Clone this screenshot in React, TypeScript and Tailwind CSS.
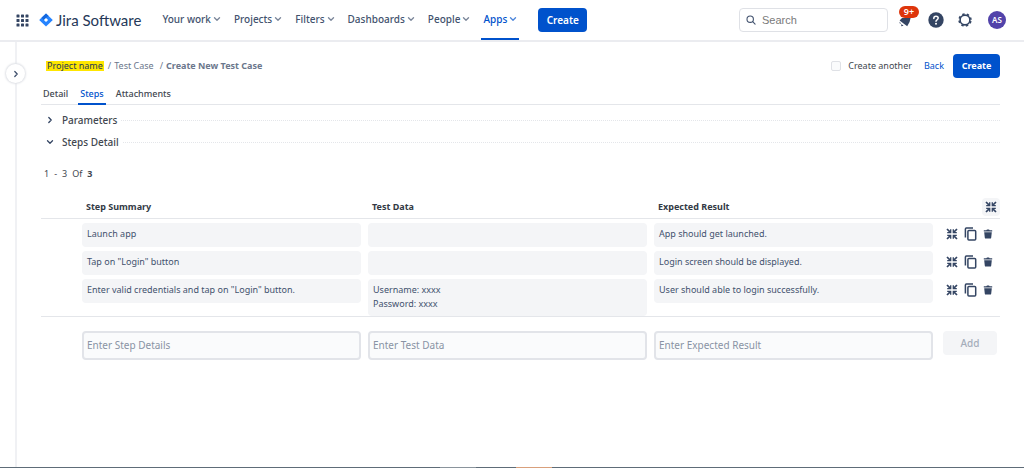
import { useState } from "react";
import clsx from "clsx";

const NAV_ITEMS = ["Your work", "Projects", "Filters", "Dashboards", "People", "Apps"];

const TABS = ["Detail", "Steps", "Attachments"];

const STEPS = [
  { summary: "Launch app", data: "", expected: "App should get launched." },
  { summary: 'Tap on "Login" button', data: "", expected: "Login screen should be displayed." },
  {
    summary: 'Enter valid credentials and tap on "Login" button.',
    data: "Username: xxxx\nPassword: xxxx",
    expected: "User should able to login successfully.",
  },
];

const DRAFT_FIELDS = ["Enter Step Details", "Enter Test Data", "Enter Expected Result"];

function Chevron({ className }: { className?: string }) {
  return (
    <svg viewBox="0 0 8 8" className={clsx("h-2 w-2 shrink-0", className)} fill="none" stroke="currentColor" strokeWidth="1.3" strokeLinecap="round" strokeLinejoin="round" aria-hidden>
      <path d="M1.5 2.8 4 5.2 6.5 2.8" />
    </svg>
  );
}

function CollapseIcon() {
  return (
    <svg viewBox="0 0 12 12" className="h-3 w-3" fill="none" stroke="currentColor" strokeWidth="1.7" aria-hidden>
      <path d="M1 1l3.4 3.4M11 1 7.6 4.4M1 11l3.4-3.4M11 11 7.6 7.6" />
      <path d="M1.2 4.7h3.5V1.2M10.8 4.7H7.3V1.2M1.2 7.3h3.5v3.5M10.8 7.3H7.3v3.5" strokeWidth="1.3" />
    </svg>
  );
}

function CopyIcon() {
  return (
    <svg viewBox="0 0 13 14" className="h-3.5 w-[13px]" fill="none" stroke="currentColor" strokeWidth="1.5" aria-hidden>
      <path d="M1.4 10.6V2q0-1 1-1h6.6" />
      <rect x="3.9" y="3.4" width="7.8" height="9.6" rx="1" />
    </svg>
  );
}

function TrashIcon() {
  return (
    <svg viewBox="0 0 10 10" className="h-2.5 w-2.5" fill="currentColor" aria-hidden>
      <path d="M.8 2.6V1.2h2.5L4 .4h2l.7.8h2.5v1.4zM1.2 3.2h7.6L8.2 8.7q-.1.9-1 .9H2.8q-.9 0-1-.9z" />
    </svg>
  );
}

function Header() {
  return (
    <header className="flex h-[42px] items-center border-b-2 border-[#ebecf0] pr-[18px] pl-4 text-[#42526e]">
      <button type="button" aria-label="Switch product">
        <svg viewBox="0 0 13 13" className="h-[13px] w-[13px]" fill="#344563" aria-hidden>
          {[0.5, 5, 9.5].map((y) => [0.5, 5, 9.5].map((x) => <rect key={`${x}-${y}`} x={x} y={y} width="3" height="3" rx="0.6" />))}
        </svg>
      </button>
      <a href="#" className="ml-2.5 flex items-center gap-[3px] whitespace-nowrap">
        <svg viewBox="0 0 14 14" className="h-3.5 w-3.5" aria-hidden>
          <path d="M7 .4 13.3 6.4q.6.6 0 1.2L7 13.6.7 7.6q-.6-.6 0-1.2z" fill="#2684ff" />
          <path d="M7 .4 9.7 3Q7.4 4 7 5L4.8 7 2.5 4.7z" fill="#1467dd" />
          <path d="M7 4.9 9.1 7 7 9.1 4.9 7z" fill="#fff" />
        </svg>
        <span className="font-['Lato',sans-serif] text-[15px] text-[#253858]">Jira Software</span>
      </a>
      <nav className="ml-[19px] flex h-10 items-stretch gap-[9px] text-[10px] font-medium whitespace-nowrap">
        {NAV_ITEMS.map((item) => (
          <button
            key={item}
            type="button"
            className={clsx(
              "mt-0.5 flex items-center gap-0.5 border-b-2 px-0.5 pb-0.5",
              item === "Apps" ? "border-[#0052cc] text-[#0052cc]" : "border-transparent",
            )}
          >
            {item}
            <Chevron className="opacity-70" />
          </button>
        ))}
      </nav>
      <button type="button" className="ml-[19px] h-6 w-[49px] rounded-sm bg-[#0052cc] text-[10px] font-semibold text-white">
        Create
      </button>
      <div className="ml-auto flex items-center">
        <label className="flex h-6 w-[149px] items-center gap-1.5 rounded border border-[#dfe1e6] px-1.5">
          <svg viewBox="0 0 10 10" className="h-2.5 w-2.5 shrink-0" fill="none" stroke="#42526e" strokeWidth="1.1" strokeLinecap="round" aria-hidden>
            <circle cx="4.2" cy="4.2" r="3.2" />
            <path d="m6.7 6.7 2.4 2.4" />
          </svg>
          <input type="search" aria-label="Search" placeholder="Search" className="w-full min-w-0 font-['Liberation_Sans',sans-serif] text-[11px] outline-none placeholder:text-[#7a7a7a]" />
        </label>
        <button type="button" aria-label="Notifications" className="relative ml-2.5 h-5 w-5">
          <svg viewBox="0 0 14 14" className="h-3.5 w-3.5" fill="#344563" aria-hidden>
            <path d="M1.6 7.6 4 5h8.6q-.4 4-3.4 8.2L7.2 11.8z" />
            <path d="m1.4 8.8 1.8 1.6-1.4.2zM3.4 11l2.2 1.8-2.4.4z" />
          </svg>
          <span className="absolute -top-1 left-px flex h-3 w-5 items-center justify-center rounded-full bg-[#de350b] text-[9px] font-semibold text-white">9+</span>
        </button>
        <button type="button" aria-label="Help" className="ml-2.5">
          <svg viewBox="0 0 16 16" className="h-4 w-4" fill="none" aria-hidden>
            <circle cx="8" cy="8" r="7.7" fill="#344563" />
            <path d="M5.8 6.4q0-2.2 2.2-2.2t2.2 1.9q0 1-1.2 1.7-1 .6-1 1.5" stroke="#fff" strokeWidth="1.5" strokeLinecap="round" />
            <circle cx="8" cy="11.7" r="1" fill="#fff" />
          </svg>
        </button>
        <button type="button" aria-label="Settings" className="ml-3.5">
          <svg viewBox="0 0 14 14" className="h-3.5 w-3.5" fill="none" stroke="#344563" aria-hidden>
            <circle cx="7" cy="7" r="4.9" strokeWidth="1.6" />
            <circle cx="7" cy="7" r="6" strokeWidth="1.5" strokeDasharray="2.4 2.312" strokeDashoffset="-1.156" />
          </svg>
        </button>
        <button type="button" aria-label="Your profile" className="ml-4 flex h-[18px] w-[18px] items-center justify-center rounded-full bg-[#5243aa] text-[8px] font-semibold text-white">
          AS
        </button>
      </div>
    </header>
  );
}

function Section({ title, open }: { title: string; open?: boolean }) {
  return (
    <button type="button" aria-expanded={!!open} className="flex h-[22px] w-full items-center pl-[5px] text-[10px] font-medium text-[#42474f]">
      <Chevron className={clsx("mr-2 text-[#344563]", !open && "-rotate-90")} />
      {title}
      <span className="ml-1 flex-1 border-t border-dotted border-[#e4e6ea]" />
    </button>
  );
}

function StepsTable() {
  return (
    <table className="mt-[15px] w-full table-fixed text-left">
      <colgroup>
        <col className="w-[41px]" />
        <col />
        <col />
        <col />
        <col className="w-[60px]" />
      </colgroup>
      <thead className="border-b border-[#e4e6ea] text-[#333a45]">
        <tr>
          <td />
          <th className="h-[22px] pl-1 font-bold">Step Summary</th>
          <th className="pl-1 font-bold">Test Data</th>
          <th className="pl-1 font-bold">Expected Result</th>
          <td>
            <button type="button" aria-label="Collapse all steps" className="ml-auto flex h-[18px] w-[18px] items-center justify-center rounded-sm bg-[#f4f5f7] text-[#344563]">
              <CollapseIcon />
            </button>
          </td>
        </tr>
      </thead>
      <tbody className="border-b border-[#e4e6ea] text-[#42526e]">
        {STEPS.map((step) => (
          <tr key={step.summary} className="align-top">
            <td />
            {[step.summary, step.data, step.expected].map((text, i) => (
              <td key={i} className="pt-1 pr-[7px]">
                <div className="min-h-6 rounded-sm bg-[#f4f5f7] px-[5px] pt-1 pb-[5px] leading-[14px] whitespace-pre-line">{text}</div>
              </td>
            ))}
            <td className="pt-1">
              <div className="flex h-[23px] items-center gap-1.5 pl-1.5 text-[#344563]">
                <button type="button" aria-label="Collapse step"><CollapseIcon /></button>
                <button type="button" aria-label="Copy step"><CopyIcon /></button>
                <button type="button" aria-label="Delete step"><TrashIcon /></button>
              </div>
            </td>
          </tr>
        ))}
      </tbody>
      <tfoot>
        <tr className="align-top">
          <td />
          {DRAFT_FIELDS.map((label) => (
            <td key={label} className="pt-[14px] pr-[7px]">
              <input aria-label={label} placeholder={label} className="h-[29px] w-full rounded-sm border-2 border-[#e2e4e9] bg-[#fafbfc] px-[3px] text-[10px] outline-none placeholder:text-[#8993a4]" />
            </td>
          ))}
          <td className="pt-[14px] pr-[3px] pl-[3px]">
            <button type="button" disabled className="h-6 w-full rounded-sm bg-[#f4f5f7] text-[10px] font-medium text-[#a5adba]">
              Add
            </button>
          </td>
        </tr>
      </tfoot>
    </table>
  );
}

export default function App() {
  const [tab, setTab] = useState("Steps");

  return (
    <div className="flex min-h-screen flex-col bg-white font-['Noto_Sans',sans-serif] text-[9px] leading-[14px]">
      <Header />
      <div className="flex flex-1">
        <aside className="relative w-[17px] shrink-0 border-r-2 border-[#f0f1f4]">
          <button type="button" aria-label="Expand sidebar" className="absolute top-[22px] left-1.5 flex h-[19px] w-[19px] items-center justify-center rounded-full bg-white text-[#42526e] shadow-[0_0_2px_1px_#dfe1e6]">
            <Chevron className="-rotate-90" />
          </button>
        </aside>
        <main className="min-w-0 flex-1 pt-3 pr-6 pl-6">
          <div className="flex h-6 items-center pl-[5px]">
            <nav aria-label="Breadcrumb" className="flex items-center text-[#6b778c]">
              <a href="#" className="bg-[#ffe600] px-px leading-[10px] text-[#253858]">Project name</a>
              <span className="ml-1 mr-[3px]">/</span>
              <a href="#">Test Case</a>
              <span className="mr-[3px] ml-1.5">/</span>
              <span className="font-bold">Create New Test Case</span>
            </nav>
            <label className="ml-auto flex items-center gap-[7px] text-[#42474f]">
              <input type="checkbox" className="h-[10px] w-[10px] appearance-none rounded-xs border border-[#dfe1e6] bg-[#fafbfc]" />
              Create another
            </label>
            <a href="#" className="ml-3 text-[#0052cc]">Back</a>
            <button type="button" className="ml-[9px] h-6 w-[47px] rounded-sm bg-[#0052cc] font-bold text-white">
              Create
            </button>
          </div>
          <div role="tablist" className="mt-1.5 flex gap-2 border-b border-[#e4e6ea] font-medium text-[#42474f]">
            {TABS.map((name) => (
              <button
                key={name}
                type="button"
                role="tab"
                aria-selected={tab === name}
                onClick={() => setTab(name)}
                className={clsx(
                  "-mb-px h-[21px] border-b-2 px-0.5",
                  tab === name ? "border-[#0052cc] text-[#0052cc]" : "border-transparent",
                )}
              >
                {name}
              </button>
            ))}
          </div>
          <div className="mt-1">
            <Section title="Parameters" />
            <Section title="Steps Detail" open />
          </div>
          <p className="mt-[14px] flex gap-[5px] pl-[3px] text-[#42474f]">
            <span>1</span>
            <span>-</span>
            <span>3</span>
            <span>Of</span>
            <b>3</b>
          </p>
          <StepsTable />
        </main>
      </div>
      <footer className="flex h-px bg-[#5e6c78]">
        <span className="ml-[43%] w-9 bg-[#8a949c]" />
        <span className="ml-10 w-9 bg-[#d9a07c]" />
      </footer>
    </div>
  );
}
